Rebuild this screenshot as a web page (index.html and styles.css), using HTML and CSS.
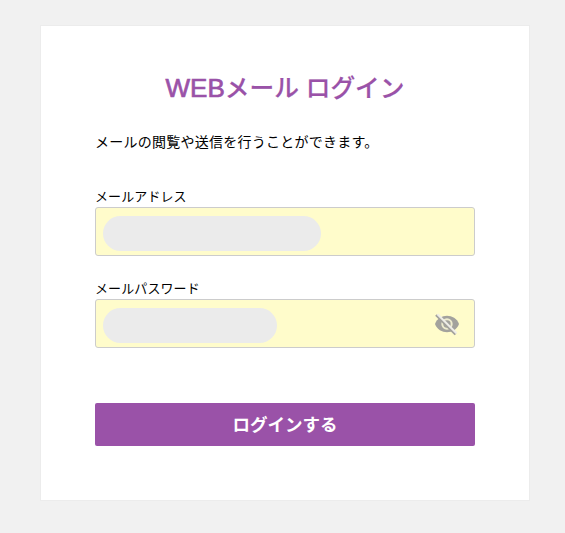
FILE: index.html
```html
<!DOCTYPE html>
<html lang="ja">
<head>
<meta charset="utf-8">
<title>WEBメール ログイン</title>
<link rel="stylesheet" href="styles.css">
</head>
<body>
<main class="card">
  <h1 class="title"><span class="title-latin">WEB</span>メール ログイン</h1>
  <p class="lead">メールの閲覧や送信を行うことができます。</p>
  <form class="form">
    <div class="field">
      <span class="label">メールアドレス</span>
      <div class="input"><span class="mask mask-mail"></span></div>
    </div>
    <div class="field">
      <span class="label">メールパスワード</span>
      <div class="input"><span class="mask mask-password"></span>
        <svg class="eye" viewBox="0 0 26 26">
          <path class="eye-shape" d="M1 13C3 7.500 8 4.800 13 4.800s10 2.700 12 8.200c-2 5.500-7 8.200-12 8.200S3 18.500 1 13z"/>
          <circle class="eye-ring" cx="13" cy="13" r="4.700"/>
          <path class="eye-slash" d="M2 4l19.500 19.500"/>
          <path class="eye-gap" d="M3.500 3.300l19 19"/>
        </svg>
      </div>
    </div>
    <button class="submit" type="button">ログインする</button>
  </form>
</main>
</body>
</html>
```
FILE: styles.css
```css
* { box-sizing: border-box; }
body {
  margin: 0;
  padding: 25px 0 0 40px;
  background: #f1f1f1;
  color: #000;
  font-family: "Liberation Sans", "Noto Sans CJK JP", sans-serif;
}
.card {
  width: 490px;
  height: 476px;
  padding: 42px 54px;
  border: 1px solid #ececec;
  background: #fff;
}
.title {
  margin: 0;
  height: 40px;
  color: #9a52a8;
  font-size: 24.7px;
  font-weight: 500;
  line-height: 40px;
  text-align: center;
  white-space: nowrap;
  -webkit-text-stroke: .2px;
}
.title-latin { font-size: 26px; -webkit-text-stroke: .7px; }
.lead {
  margin: 22px 0 0;
  height: 24px;
  font-size: 14px;
  letter-spacing: .25px;
  line-height: 25px;
  white-space: nowrap;
}
.form { display: flex; flex-direction: column; margin-top: 33px; }
.field { margin-bottom: 23px; }
.label {
  display: block;
  height: 20px;
  font-size: 13px;
  letter-spacing: .1px;
  line-height: 19px;
}
.input {
  display: flex;
  align-items: center;
  justify-content: space-between;
  height: 49px;
  padding: 3px 14px 0 7px;
  border: 1px solid #ccc;
  border-radius: 3px;
  background: #fffccb;
}
.mask { height: 35px; border-radius: 18px; background: #ebebeb; }
.mask-mail { width: 218px; }
.mask-password { width: 174px; }
.eye { width: 26px; height: 26px; margin-top: -3px; fill: none; }
.eye-shape { fill: #a3a29d; }
.eye-ring { stroke: #efedcf; stroke-width: 2; }
.eye-gap { stroke: #efeee8; stroke-width: 2; }
.eye-slash { stroke: #a3a29d; stroke-width: 2.4; }
.submit {
  height: 43px;
  margin-top: 32px;
  padding: 0 0 1px;
  border: 0;
  border-radius: 2px;
  background: #9a52a8;
  color: #fff;
  font: 700 17.5px/42px "Noto Sans CJK JP", sans-serif;
}
```
